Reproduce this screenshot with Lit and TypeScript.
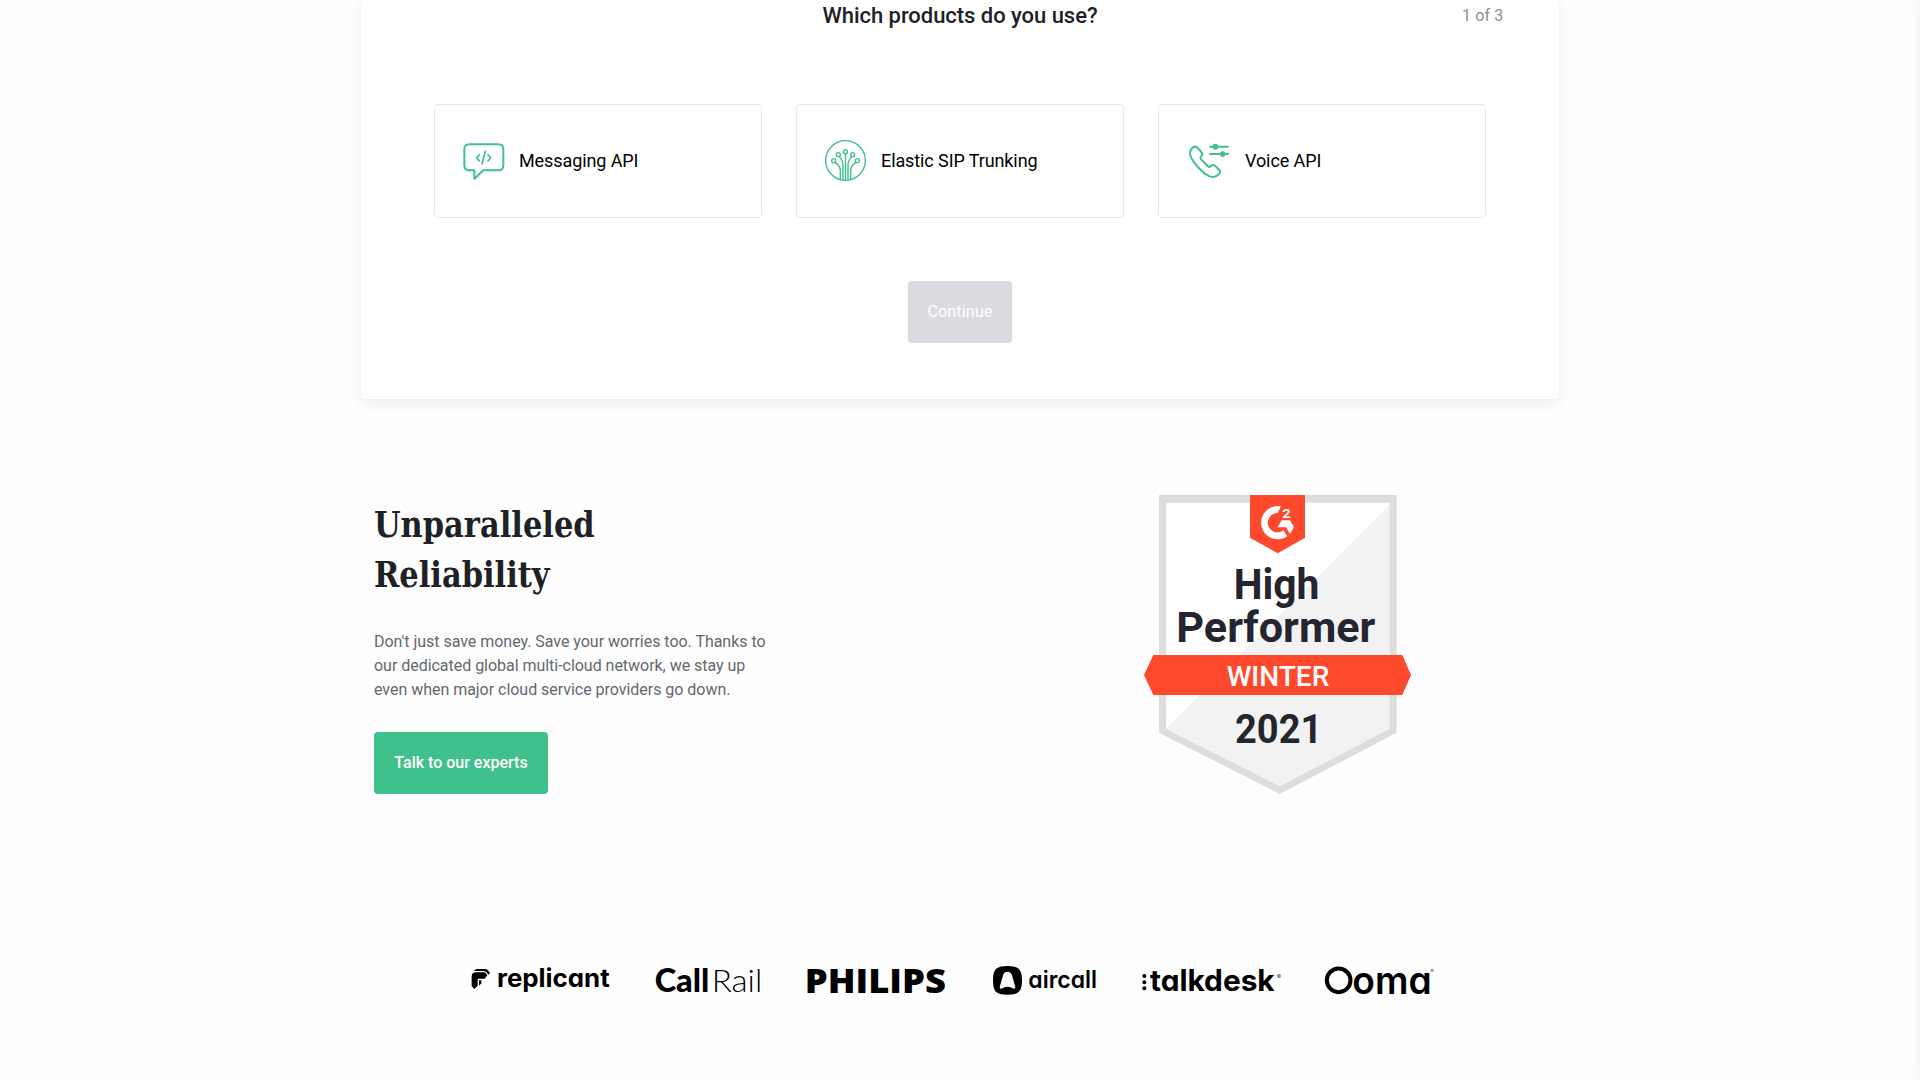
import { LitElement, html, css, svg } from "lit";
import { customElement } from "lit/decorators.js";

const GREEN = "#40c18b";

const messagingIcon = html`<svg width="42" height="42" viewBox="69 60 126 126" fill="none" stroke=${GREEN} stroke-width="6" stroke-linecap="round" stroke-linejoin="round">
  <path d="M88 73H175Q190 73 190 88V136Q190 151 175 151H130L103 176V151H88Q73 151 73 136V88Q73 73 88 73Z"/>
  <path stroke-width="5" d="M118 104l-8 9.500 8 9.500M144 104l8 9.500-8 9.500M136 94l-10 38"/>
</svg>`;

const trunkingIcon = html`<svg width="42" height="42" viewBox="75 60 126 126" fill="none" stroke=${GREEN} stroke-width="4.200">
  <circle cx="136.500" cy="121.500" r="59.500"/>
  ${[[101, 122], [115, 104], [136.5, 95], [158, 104], [172, 122]].map(
    ([x, y]) => svg`<circle cx=${x} cy=${y} r="6"/>`
  )}
  <path d="M136.500 101V180M118 110C127 118 129 125 129 137V180M155 110C146 118 144 125 144 137V180M105 127C115 135 121 140 121 152V178M168 127C158 135 152 140 152 152V178"/>
</svg>`;

const voiceIcon = html`<svg width="44" height="42" viewBox="111 150 132 126" fill="none" stroke=${GREEN} stroke-width="6" stroke-linecap="round" stroke-linejoin="round">
  <path d="M127 174C132 169 138 169 142 173L154 186C158 190 158 193 155 197C150 202 150 204 154 209L173 228C177 232 180 231 183 228C188 224 192 224 196 228L208 240C212 244 212 247 208 251C198 263 183 265 168 253C150 240 134 222 124 204C118 192 119 182 127 174Z"/>
  <path d="M180 170H234M180 192H234"/>
  <circle cx="196" cy="170" r="5.500" fill=${GREEN}/>
  <circle cx="218" cy="192" r="5.500" fill=${GREEN}/>
</svg>`;

const products = [
  { icon: messagingIcon, name: "Messaging API" },
  { icon: trunkingIcon, name: "Elastic SIP Trunking" },
  { icon: voiceIcon, name: "Voice API" },
];

@customElement("product-quiz")
export class ProductQuiz extends LitElement {
  static styles = css`
    :host { display: block; }
    .panel {
      box-sizing: border-box;
      width: 1198.500px;
      height: 399px;
      margin: 0 auto;
      background: #fff;
      border-radius: 0 0 4px 4px;
      box-shadow: 0 6px 12px rgba(0, 0, 0, 0.06), 0 0 3px rgba(0, 0, 0, 0.05);
      display: flex;
      flex-direction: column;
      align-items: center;
    }
    .head {
      width: 100%;
      height: 104px;
      box-sizing: border-box;
      padding: 1px 56px 0;
      display: grid;
      grid-template-columns: 1fr auto 1fr;
      align-items: start;
      line-height: 30px;
    }
    .title {
      grid-column: 2;
      margin: 0;
      font-size: 22px;
      font-weight: 500;
      color: #202124;
      letter-spacing: -0.04px;
    }
    .step { justify-self: end; font-size: 16px; color: #8d9094; letter-spacing: 0.1px; }
    .cards { display: flex; gap: 34px; }
    .card {
      box-sizing: border-box;
      width: 328px;
      height: 114px;
      border: 1px solid #e8e8e9;
      border-radius: 4px;
      padding: 0 28px;
      display: flex;
      align-items: center;
      gap: 14px;
      font-size: 18px;
      letter-spacing: -0.1px;
      color: #000;
      white-space: nowrap;
    }
    .card svg { display: block; }
    .name { padding-bottom: 2px; }
    .go {
      margin-top: 63px;
      width: 104px;
      height: 62px;
      border: 0;
      border-radius: 4px;
      background: #dadbe0;
      color: #fff;
      font: 400 16px Roboto, sans-serif;
      letter-spacing: 0.2px;
      padding: 0 0 2px;
    }
  `;
  render() {
    return html`<section class="panel">
      <div class="head"><h2 class="title">Which products do you use?</h2><span class="step">1 of 3</span></div>
      <div class="cards">
        ${products.map((p) => html`<div class="card">${p.icon}<span class="name">${p.name}</span></div>`)}
      </div>
      <button class="go">Continue</button>
    </section>`;
  }
}

@customElement("reliability-section")
export class ReliabilitySection extends LitElement {
  static styles = css`
    :host { display: flex; justify-content: space-between; padding: 96px 509px 0 374px; height: 299px; }
    .copy { width: 420px; padding-top: 5px; }
    .title {
      margin: 0;
      font-family: "Roboto Slab", "DejaVu Serif Condensed", "DejaVu Serif", serif;
      font-stretch: condensed;
      font-weight: 700;
      font-size: 35.500px;
      line-height: 50px;
      color: #202124;
      transform: scaleX(0.955);
      transform-origin: 0 0;
    }
    .text { margin: 30px 0 0; font-size: 16px; line-height: 24px; letter-spacing: -0.03px; color: #65686d; white-space: nowrap; }
    .cta {
      margin-top: 30px;
      width: 174px;
      height: 62px;
      border: 0;
      padding: 0 0 2px;
      border-radius: 4px;
      background: #40c18b;
      color: #fff;
      font: 500 16px Roboto, sans-serif;
    }
    .badge { display: block; font-family: Roboto, sans-serif; font-weight: 700; }
  `;
  render() {
    return html`
      <div class="copy">
        <h2 class="title">Unparalleled<br />Reliability</h2>
        <p class="text">Don't just save money. Save your worries too. Thanks to<br />our dedicated global multi-cloud network, we stay up<br />even when major cloud service providers go down.</p>
        <button class="cta">Talk to our experts</button>
      </div>
      <svg class="badge" width="267" height="299" viewBox="42 45 801 897">
        <path fill="#dcdedc" d="M87 45H800V758L449 942L87 758Z"/>
        <path fill="#fff" d="M108 68H778V746L449 918L108 746Z"/>
        <path fill="#f2f2f2" d="M778 75V746L449 918L108 746Z"/>
        <path fill="#ff492c" d="M360 45H525V173L443 220L360 173Z"/>
        <path fill="#fff" d="M453 79L443 99A29 29 0 1 0 460 151L472 169A50 50 0 1 1 453 79Z"/>
        <path fill="#fff" d="M455 121H480L492 141L480 162L468 142H443Z"/>
        <text x="457" y="113" font-size="41" fill="#fff" textLength="25" lengthAdjust="spacingAndGlyphs">2</text>
        <g fill="#252530">
          <text x="311" y="356" font-size="125" textLength="257" lengthAdjust="spacingAndGlyphs">High</text>
          <text x="139" y="486" font-size="125" textLength="597" lengthAdjust="spacingAndGlyphs">Performer</text>
          <text x="315" y="790" font-size="124" textLength="262" lengthAdjust="spacingAndGlyphs">2021</text>
        </g>
        <path fill="#ff492c" d="M70 525H817L843 585L817 645H70L42 585Z"/>
        <text x="290" y="617" font-size="83" font-weight="500" fill="#fff" textLength="308" lengthAdjust="spacingAndGlyphs">WINTER</text>
      </svg>`;
  }
}

@customElement("customer-logos")
export class CustomerLogos extends LitElement {
  static styles = css`
    :host { display: flex; gap: 46px; padding-left: 471px; }
    svg { display: block; overflow: visible; fill: #000; }
    .geo { font-family: Inter, sans-serif; font-feature-settings: "cv11"; }
    .lato { font-family: Lato, sans-serif; }
    .hum { font-family: "Open Sans", sans-serif; font-weight: 800; }
  `;
  render() {
    return html`
      <svg class="geo" width="139" height="40" viewBox="33 30 417 120">
        <path d="M41 63Q45 57 52 57H76Q80 57 83 60L90 68L86 74L78 66Q75 63 71 63Z"/>
        <path d="M35 80Q35 67 48 67H72Q75 67 77 69L82 76L74 86H56Q53 86 53 90V107L43 117L35 108Z"/>
        <path d="M57 91H64V100L57 107Z"/>
        <text x="111" y="110" font-size="75" font-weight="700" textLength="338" lengthAdjust="spacingAndGlyphs">replicant</text>
      </svg>
      <svg class="lato" width="104" height="40" viewBox="588 30 312 120">
        <text x="584" y="127" font-size="98" font-weight="900" textLength="164" lengthAdjust="spacingAndGlyphs">Call</text>
        <text x="755" y="126" font-size="96" font-weight="300" textLength="152" lengthAdjust="spacingAndGlyphs">Rail</text>
      </svg>
      <svg class="hum" width="140" height="40" viewBox="78 30 420 120">
        <text x="74" y="129" font-size="101" textLength="424" lengthAdjust="spacingAndGlyphs">PHILIPS</text>
      </svg>
      <svg class="geo" width="104" height="40" viewBox="636 30 312 120">
        <path fill-rule="evenodd" d="M682 48C716 48 726 58 726 91C726 125 716 134 682 134C648 134 639 125 639 91C639 58 648 48 682 48ZM675 67Q682 64 689 67Q694 70 696 76L706 112Q706 117 701 116Q695 115 692 112Q682 108 673 112Q670 115 664 116Q659 117 659 112L669 76Q671 70 675 67Z"/>
        <text x="745" y="113" font-size="72" font-weight="600" textLength="206" lengthAdjust="spacingAndGlyphs">aircall</text>
      </svg>
      <svg class="geo" width="136" height="40" viewBox="66 30 408 120">
        <circle cx="73" cy="78" r="6"/><circle cx="73" cy="97" r="6"/><circle cx="73" cy="115" r="6"/>
        <text x="90" y="122" font-size="88" font-weight="700" textLength="374" lengthAdjust="spacingAndGlyphs">talkdesk</text>
        <text x="470" y="87" font-size="19" fill="#333">®</text>
      </svg>
      <svg class="geo" width="112" height="40" viewBox="612 30 336 120">
        <circle cx="656" cy="91" r="35.500" fill="none" stroke="#000" stroke-width="12"/>
        <text x="697" y="131" font-size="113" font-weight="600" textLength="238" lengthAdjust="spacingAndGlyphs">oma</text>
        <text x="931" y="70" font-size="16" fill="#555">®</text>
      </svg>`;
  }
}

@customElement("app-root")
export class AppRoot extends LitElement {
  static styles = css`
    :host {
      display: block;
      position: relative;
      width: 1920px;
      height: 1080px;
      overflow: hidden;
      background: #fefefe;
      font-family: Roboto, sans-serif;
    }
    .logos { margin-top: 166px; }
    .edge { position: absolute; left: 1920px; top: 0; width: 20px; height: 1080px; box-shadow: 0 0 14px rgba(0, 0, 0, 0.08); }
  `;
  render() {
    return html`
      <product-quiz></product-quiz>
      <reliability-section></reliability-section>
      <customer-logos class="logos"></customer-logos>
      <div class="edge"></div>`;
  }
}
